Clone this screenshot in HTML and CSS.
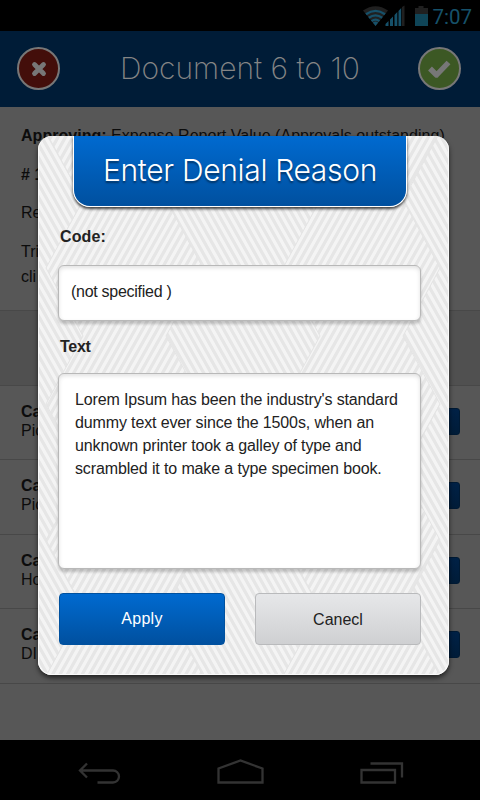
FILE: index.html
```
<!DOCTYPE html>
<html lang="en">
<head>
<meta charset="utf-8">
<title>Enter Denial Reason</title>
<link rel="stylesheet" href="styles.css">
</head>
<body>
<div class="screen">
  <div class="status">
    <svg class="status-icons" width="66" height="24" viewBox="0 0 66 24">
      <path d="M0 4.5Q12.500 -4 25 4.500L12.500 20Z" fill="#202020"/>
      <g fill="none" stroke="#16516a" stroke-width="2.300">
        <path d="M3 8.300Q12.500 1.500 22 8.300"/>
        <path d="M5.800 11.700Q12.500 7 19.200 11.700"/>
        <path d="M8.600 15.100Q12.500 12.300 16.400 15.100"/>
      </g>
      <path d="M9.800 16.500Q12.500 14.600 15.200 16.500L12.500 20Z" fill="#16516a"/>
      <path d="M22.500 20v-2l3-3v5zM27 20v-6.500l3-3V20zM31.500 20V9l2.800-3v14zM35.500 20V5l2.700-3v18z" fill="#16516a"/>
      <path d="M39 20V1l2.500-1.500V20z" fill="#202020"/>
      <path d="M52 8V2h3.500V0h5v2H65v6z" fill="#202020"/>
      <path d="M52 8h13v12H52z" fill="#0f4558"/>
    </svg>
    <span class="time">7:07</span>
  </div>
  <header class="topbar">
    <span class="round deny"><svg width="16" height="16" viewBox="0 0 16 16"><path d="M3.500 3.500l9 9M12.500 3.500l-9 9" stroke="#777" stroke-width="4.800" stroke-linecap="round"/></svg></span>
    <h1>Document 6 to 10</h1>
    <span class="round accept"><svg width="24" height="20" viewBox="0 0 24 20"><path d="M3 9.500l6.500 6.500L21.500 3.500" fill="none" stroke="#777" stroke-width="5.400" stroke-linejoin="round"/></svg></span>
  </header>
  <main class="content">
    <section class="details">
      <p><b>Approving:</b> Expense Report Value (Approvals outstanding)</p>
      <p><b># 1</b></p>
      <p>Re</p>
      <p>Tri<br>cli</p>
    </section>
    <div class="band"></div>
    <div class="row"><div><b>Ca</b><br>Pic</div><span class="chip"></span></div>
    <div class="row"><div><b>Ca</b><br>Pic</div><span class="chip"></span></div>
    <div class="row"><div><b>Ca</b><br>Ho</div><span class="chip"></span></div>
    <div class="row"><div><b>Ca</b><br>DI</div><span class="chip"></span></div>
  </main>
  <nav class="navbar">
    <svg width="480" height="60" viewBox="0 0 480 60" fill="none" stroke="#333" stroke-width="2.300">
      <path d="M87 23.500l-7 7 7 7M80 30.500h33a6 6 0 0 1 0 12H97.500"/>
      <path d="M218.500 42.500V28.500L240.500 20.500l22 8v14z"/>
      <path d="M361.500 30h33.500v12.500h-33.500zM370.500 23.500h31.500v14"/>
    </svg>
  </nav>
</div>

<div class="dialog">
  <svg class="weave" width="411" height="539" viewBox="38 136 411 539">
    <defs>
      <pattern id="left" width="7.400" height="20" patternUnits="userSpaceOnUse" patternTransform="skewX(29.300)">
        <rect width="7.400" height="20" fill="#f4f4f4"/><rect width="3.700" height="20" fill="#e6e6e6"/>
      </pattern>
      <pattern id="right" width="7.400" height="20" patternUnits="userSpaceOnUse" patternTransform="skewX(-29.300)">
        <rect width="7.400" height="20" fill="#f4f4f4"/><rect width="3.700" height="20" fill="#e6e6e6"/>
      </pattern>
      <path id="column" d="M46 132L83 200 46 268 83 336 46 404 83 472 46 540 83 608 46 676H203L166 608 203 540 166 472 203 404 166 336 203 268 166 200 203 132Z" fill="url(#right)" stroke="#e4e4e4"/>
    </defs>
    <rect x="38" y="136" width="411" height="539" fill="url(#left)"/>
    <use href="#column"/>
    <use href="#column" x="237"/>
  </svg>
  <h2>Enter Denial Reason</h2>
  <div class="form">
    <label class="code-label">Code:</label>
    <div class="field code"><span>(not specified )</span></div>
    <label class="text-label">Text</label>
    <div class="field text">Lorem Ipsum has been the industry's standard<br>dummy text ever since the 1500s, when an<br>unknown printer took a galley of type and<br>scrambled it to make a type specimen book.</div>
    <div class="actions">
      <button class="apply">Apply</button>
      <button class="cancel">Canecl</button>
    </div>
  </div>
</div>
</body>
</html>
```

FILE: styles.css
```
* { box-sizing: border-box; }
body {
  margin: 0;
  position: relative;
  width: 480px;
  height: 800px;
  overflow: hidden;
  background: #000;
  font-family: "Liberation Sans", Arial, sans-serif;
  font-size: 16px;
}
.screen { display: flex; flex-direction: column; height: 800px; color: #0c0c0c; }
.status {
  height: 31px;
  display: flex;
  justify-content: flex-end;
  padding: 5px 8px 0 0;
  gap: 3px;
}
.status-icons { margin-top: 1px; overflow: visible; }
.time { font: 20.500px/24px Roboto, sans-serif; color: #16516a; }
.topbar {
  height: 76px;
  background: #001c37;
  display: flex;
  align-items: center;
  justify-content: space-between;
  padding: 0 19px 0 17px;
}
.topbar h1 {
  margin: -3px 0 0 2px;
  font: 200 30px/40px Inter, sans-serif;
  color: #858585;
  white-space: nowrap;
}
.round {
  width: 43px;
  height: 43px;
  border: 2px solid #777;
  border-radius: 50%;
  display: flex;
  align-items: center;
  justify-content: center;
  margin-top: -1px;
}
.deny { background: #430e0a; }
.accept { background: #3c5824; }
.content { height: 633px; background: #575757; }
.details { height: 203px; padding: 16px 21px 0; line-height: 25.500px; }
.details p { margin: 0 0 13px; white-space: nowrap; letter-spacing: .030px; }
.band { height: 76px; background: #505050; border: solid #484848; border-width: 1px 0; }
.row {
  height: 74.400px;
  border-bottom: 1px solid #484848;
  padding: 16px 20px 0 21px;
  display: flex;
  justify-content: space-between;
  line-height: 19px;
}
.chip { width: 70px; height: 27px; margin-top: 6px; border-radius: 3px; background: linear-gradient(#002146, #001c38); border: 1px solid #001a34; }
.navbar { height: 60px; background: #000; }

.dialog {
  position: absolute;
  left: 38px;
  top: 136px;
  width: 411px;
  height: 539px;
  isolation: isolate;
  border-radius: 14px;
  box-shadow: 0 3px 5px rgba(0, 0, 0, .6);
  color: #222;
  display: flex;
  flex-direction: column;
  align-items: center;
}
.weave { position: absolute; inset: 0; z-index: -1; border-radius: 14px; }
.dialog::after {
  content: "";
  position: absolute;
  inset: 0;
  border: 1px solid #fafafa;
  border-top: 0;
  border-radius: 14px;
  pointer-events: none;
}
.dialog h2 {
  margin: 0 0 0 -7px;
  width: 334px;
  height: 71px;
  border: 1px solid #fff;
  border-top: 0;
  border-radius: 0 0 17px 17px;
  background: linear-gradient(#006ad0, #00509f);
  box-shadow: 0 2px 3px rgba(0, 0, 0, .75);
  color: #fff;
  font: 300 30px/40px Inter, sans-serif;
  letter-spacing: -.320px;
  text-align: center;
  white-space: nowrap;
  padding-top: 14px;
  text-shadow: 0 2px 2px rgba(0, 0, 0, .45);
}
.form { width: 363px; margin-left: -8px; display: flex; flex-direction: column; }
label { font-weight: bold; padding-left: 2px; line-height: 20px; }
.code-label { margin-top: 20px; letter-spacing: .100px; }
.text-label { margin-top: 16px; letter-spacing: -.300px; }
.field {
  background: #fff;
  border: 1px solid #b8b8b8;
  border-radius: 6px;
  box-shadow: 0 3px 3px rgba(0, 0, 0, .2), inset 0 2px 4px rgba(0, 0, 0, .12);
}
.code { height: 56px; margin-top: 18px; padding: 0 12px 2px; display: flex; align-items: center; letter-spacing: -.280px; }
.text { height: 196px; margin-top: 16px; padding: 14px 16px; line-height: 23px; white-space: nowrap; letter-spacing: -.130px; }
.actions { display: flex; justify-content: space-between; margin-top: 24px; padding-left: 1px; }
button {
  width: 166px;
  height: 52px;
  border-radius: 4px;
  padding: 0;
  font: 16px "Liberation Sans", Arial, sans-serif;
}
.apply { color: #fff; background: linear-gradient(#006ad0, #00509f); border: 1px solid #00519f; letter-spacing: .300px; }
.cancel { color: #222; background: linear-gradient(#e6e7e9, #cfd0d2); border: 1px solid #b9babc; padding-top: 2px; }
```
